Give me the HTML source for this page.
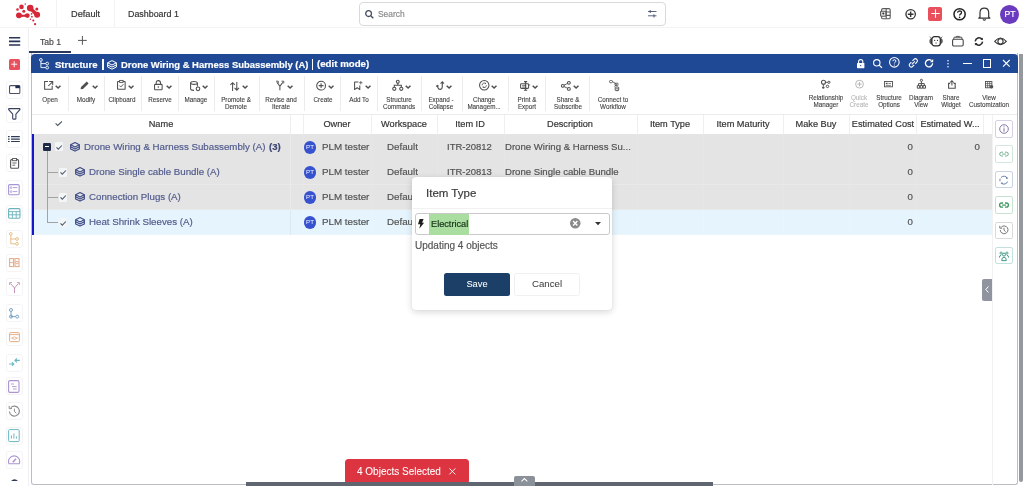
<!DOCTYPE html>
<html><head><meta charset="utf-8">
<style>
*{box-sizing:border-box;margin:0;padding:0}
html,body{width:1024px;height:486px;overflow:hidden;background:#fff;font-family:"Liberation Sans",sans-serif;color:#333}
.a{position:absolute}
.t{position:absolute;white-space:nowrap;line-height:1;will-change:transform;-webkit-text-stroke:0.18px currentColor}
svg{position:absolute;overflow:visible}
.lb{position:absolute;width:60px;text-align:center;font-size:6.3px;line-height:7.2px;color:#3d3d3d;white-space:nowrap;will-change:transform;-webkit-text-stroke:0.1px currentColor}
</style></head><body>
<div class="a" style="left:0px;top:27.3px;width:1024px;height:1px;background:#f3f3f3;"></div>
<div class="a" style="left:56px;top:0px;width:1px;height:27px;background:#f2f2f2;"></div>
<div class="a" style="left:114px;top:0px;width:1px;height:27px;background:#f2f2f2;"></div>
<svg style="left:0px;top:0px;" width="50" height="28" viewBox="0 0 50 28"><circle cx="21.5" cy="6.9" r="2.3" fill="#d62839"/><circle cx="25.3" cy="4.0" r="0.8" fill="#d62839"/><circle cx="30.2" cy="8.1" r="3.3" fill="#d62839"/><circle cx="37.1" cy="14.7" r="3.0" fill="#d62839"/><circle cx="36.8" cy="8.9" r="1.5" fill="#d62839"/><circle cx="17.5" cy="9.5" r="1.3" fill="#d62839"/><circle cx="23.8" cy="11.2" r="1.5" fill="#d62839"/><circle cx="18.9" cy="15.3" r="2.9" fill="#d62839"/><circle cx="27.3" cy="15.6" r="2.4" fill="#d62839"/><circle cx="31.6" cy="13.8" r="0.9" fill="#d62839"/><circle cx="31.9" cy="16.7" r="0.9" fill="#d62839"/><circle cx="30.4" cy="19.3" r="0.7" fill="#d62839"/><circle cx="33.3" cy="20.5" r="1.1" fill="#d62839"/><circle cx="35.1" cy="24.2" r="1.1" fill="#d62839"/><path d="M29.3 9.8 L31.8 7.4 L38.3 13.6 L35.8 16Z" fill="#d62839"/><path d="M19 14.1 Q23 15.3 27.3 14.1 L27.3 17.1 Q23 16.2 19 17.4Z" fill="#d62839"/></svg>
<div class="t" style="left:70.50px;top:10.31px;font-size:9.2px;color:#333;font-weight:normal;">Default</div>
<div class="t" style="left:127.60px;top:9.57px;font-size:8.9px;color:#333;font-weight:normal;">Dashboard 1</div>
<div class="a" style="left:358.5px;top:2px;width:307.5px;height:23.5px;border:1px solid #d9d9d9;border-radius:4px"></div>
<svg style="left:364.5px;top:10.2px;" width="9" height="8.5" viewBox="0 0 9 8.5"><circle cx="3.6" cy="3.6" r="2.9" fill="none" stroke="#454b5e" stroke-width="1.3"/><path d="M5.8 5.8 L8.3 8.2" stroke="#454b5e" stroke-width="1.4"/></svg>
<div class="t" style="left:377.80px;top:9.69px;font-size:8.4px;color:#8a8a8a;font-weight:normal;">Search</div>
<svg style="left:648px;top:9.8px;" width="8.5" height="7.5" viewBox="0 0 8.5 7.5"><path d="M0 1.5H8.5M0 5.8H8.5" stroke="#4a5570" stroke-width="0.9"/><path d="M2.2 0V3M6 4.3V7.5" stroke="#4a5570" stroke-width="1"/></svg>
<svg style="left:880.3px;top:8.2px;" width="10.8" height="11.4" viewBox="0 0 10.8 11.4"><rect x="1.6" y="0.6" width="8.6" height="10.2" rx="1.4" fill="none" stroke="#5a5a5a" stroke-width="1.1"/><rect x="0.6" y="3.2" width="5.4" height="5" rx="0.8" fill="#e2e2e2" stroke="#5a5a5a" stroke-width="1.1"/><path d="M6.2 0.6V10.8M6.2 4H10.2M6.2 7.4H10.2" stroke="#5a5a5a" stroke-width="1.1"/><circle cx="3.3" cy="5.6" r="1" fill="#333"/></svg>
<svg style="left:904.6px;top:8.7px;" width="11.3" height="10.5" viewBox="0 0 11.3 10.5"><circle cx="5.65" cy="5.25" r="4.7" fill="none" stroke="#333" stroke-width="1.3"/><path d="M5.65 2.4V8.1M2.8 5.25H8.5" stroke="#333" stroke-width="1.4"/></svg>
<div class="a" style="left:927.9px;top:6.8px;width:14.3px;height:14.2px;background:#e9505c;border-radius:2px;"></div>
<svg style="left:930.6px;top:9.4px;" width="9" height="9" viewBox="0 0 9 9"><path d="M4.5 0.3V8.7M0.3 4.5H8.7" stroke="#fff" stroke-width="1.05"/></svg>
<svg style="left:953px;top:7.8px;" width="13.2" height="12.5" viewBox="0 0 13.2 12.5"><circle cx="6.6" cy="6.25" r="5.6" fill="none" stroke="#222" stroke-width="1.5"/><path d="M4.6 4.7 Q4.7 2.8 6.6 2.8 Q8.6 2.9 8.5 4.6 Q8.4 5.8 7 6.4 Q6.6 6.7 6.6 7.6" fill="none" stroke="#222" stroke-width="1.3"/><circle cx="6.6" cy="9.4" r="0.8" fill="#222"/></svg>
<svg style="left:978.3px;top:6.8px;" width="12.7" height="13.5" viewBox="0 0 12.7 13.5"><path d="M2 10 V5.8 Q2 1.2 6.35 1.2 Q10.7 1.2 10.7 5.8 V10 L11.9 11.2 H0.8 Z" fill="none" stroke="#333" stroke-width="1.2" stroke-linejoin="round"/><path d="M4.9 12.3 Q6.35 13.8 7.8 12.3" fill="none" stroke="#333" stroke-width="1.2"/></svg>
<div class="a" style="left:1000px;top:4.5px;width:19px;height:19px;background:#6a3abf;border-radius:50%;"></div>
<div class="t" style="left:999.50px;top:10.02px;width:20px;text-align:center;font-size:8.6px;color:#fff;font-weight:normal;">PT</div>
<div class="a" style="left:28px;top:28px;width:1px;height:458px;background:#eef0f3;"></div>
<svg style="left:8.6px;top:37px;" width="11.2" height="8.8" viewBox="0 0 11.2 8.8"><path d="M0 0.8H11.2M0 4.4H11.2M0 8H11.2" stroke="#2a3454" stroke-width="1.6"/></svg>
<div class="t" style="left:40.30px;top:37.62px;font-size:8.6px;color:#4a4a4a;font-weight:normal;">Tab 1</div>
<svg style="left:78.3px;top:36.1px;" width="8.8" height="8.8" viewBox="0 0 8.8 8.8"><path d="M4.4 0V8.8M0 4.4H8.8" stroke="#555" stroke-width="1"/></svg>
<div class="a" style="left:29px;top:51px;width:42.2px;height:2px;background:#28385a;"></div>
<svg style="left:929.3px;top:35.5px;" width="14" height="10.5" viewBox="0 0 14 10.5"><path d="M3 2 Q0.4 2.4 0.4 5.2 Q0.4 8 3 8.5 Z M11.2 2 Q13.8 2.4 13.8 5.2 Q13.8 8 11.2 8.5 Z" fill="#5a5a5a"/><path d="M0.9 0.6 L2.6 2.4 M13.3 0.6 L11.6 2.4" stroke="#666" stroke-width="0.9"/><rect x="2.9" y="0.6" width="8.4" height="9.3" rx="2.6" fill="#fff" stroke="#2a2a2a" stroke-width="1.2"/><path d="M4.9 5 L5.7 3.6 L6.5 5Z M7.7 5 L8.5 3.6 L9.3 5Z" fill="#333"/><path d="M5.8 6.8 Q7.1 8.2 8.4 6.8 Z" fill="#333"/></svg>
<svg style="left:951.9px;top:36px;" width="11.8" height="10.5" viewBox="0 0 11.8 10.5"><rect x="0.6" y="3.2" width="10.6" height="6.8" rx="1.2" fill="none" stroke="#444" stroke-width="1.1"/><path d="M1.8 3.2 V2 Q1.8 1.2 2.6 1.2 H9.2 Q10 1.2 10 2 V3.2" fill="none" stroke="#444" stroke-width="1"/><path d="M4.5 1.2V0.4H7.3V1.2" fill="none" stroke="#444" stroke-width="0.8"/></svg>
<svg style="left:974px;top:37px;" width="9.8" height="9" viewBox="0 0 9.8 9"><path d="M1.2 4.3 A3.9 3.9 0 0 1 8 2.2" fill="none" stroke="#2a2a2a" stroke-width="1.5"/><path d="M8.6 4.7 A3.9 3.9 0 0 1 1.8 6.8" fill="none" stroke="#2a2a2a" stroke-width="1.5"/><path d="M8.9 0.4V3H6.3Z" fill="#333"/><path d="M0.9 8.6V6H3.5Z" fill="#333"/></svg>
<svg style="left:994px;top:36.7px;" width="13" height="8.8" viewBox="0 0 13 8.8"><path d="M0.7 4.4 Q6.5 -2.4 12.3 4.4 Q6.5 11.2 0.7 4.4Z" fill="none" stroke="#333" stroke-width="1.05"/><circle cx="6.5" cy="4.4" r="2.6" fill="none" stroke="#333" stroke-width="1.1"/></svg>
<div class="a" style="left:31px;top:53.2px;width:986.5px;height:431.8px;border:1px solid #babec3;border-top:none;border-radius:0 0 3px 3px"></div>
<div class="a" style="left:31px;top:53.5px;width:986.5px;height:19.6px;background:#1f4995;border-radius:4px 4px 0 0;"></div>
<svg style="left:39px;top:57.9px;" width="10" height="11.7" viewBox="0 0 10 11.7"><circle cx="1.9" cy="1.9" r="1.4" fill="none" stroke="#fff" stroke-width="0.9"/><path d="M1.9 3.3V9.6H6.8M1.9 5.6H6.8" fill="none" stroke="#fff" stroke-width="0.9"/><circle cx="8.2" cy="5.6" r="1.4" fill="none" stroke="#fff" stroke-width="0.9"/><circle cx="8.2" cy="9.6" r="1.4" fill="none" stroke="#fff" stroke-width="0.9"/></svg>
<div class="t" style="left:55.20px;top:59.52px;font-size:9.55px;color:#fff;font-weight:bold;">Structure</div>
<div class="a" style="left:102.4px;top:59.3px;width:1.2px;height:10.7px;background:#fff;"></div>
<svg style="left:107.1px;top:60.1px;" width="9.8" height="9.5" viewBox="0 0 9.8 9.5"><path d="M5 0.6 L9.4 2.8 V7 L5 9.2 L0.6 7 V2.8Z" fill="none" stroke="#fff" stroke-width="1.0" stroke-linejoin="round"/><path d="M0.6 2.8 L5 5 L9.4 2.8 M0.6 4.9 L5 7.1 L9.4 4.9" fill="none" stroke="#fff" stroke-width="1.0" stroke-linejoin="round"/></svg>
<div class="t" style="left:120.60px;top:59.62px;font-size:9.43px;color:#fff;font-weight:bold;">Drone Wiring &amp; Harness Subassembly (A)</div>
<div class="a" style="left:312.3px;top:59.3px;width:1.2px;height:10.7px;background:#fff;"></div>
<div class="t" style="left:316.60px;top:59.39px;font-size:9.7px;color:#fff;font-weight:bold;">(edit mode)</div>
<svg style="left:856.6px;top:58.8px;" width="7.4" height="9.2" viewBox="0 0 7.4 9.2"><path d="M1.6 4.2 V2.6 Q1.6 0.6 3.7 0.6 Q5.8 0.6 5.8 2.6 V4.2" fill="none" stroke="#fff" stroke-width="1.1"/><rect x="0" y="4" width="7.4" height="5.2" rx="0.6" fill="#fff"/><circle cx="3.7" cy="6.6" r="0.7" fill="#1f4995"/></svg>
<svg style="left:872.7px;top:59.3px;" width="9.3" height="8.7" viewBox="0 0 9.3 8.7"><circle cx="3.8" cy="3.8" r="3.2" fill="none" stroke="#fff" stroke-width="1.1"/><path d="M6.1 6.1 L9 8.7" stroke="#fff" stroke-width="1.2"/></svg>
<svg style="left:889.3px;top:57.3px;" width="10.7" height="10.7" viewBox="0 0 10.7 10.7"><circle cx="5.35" cy="5.35" r="4.8" fill="none" stroke="#fff" stroke-width="1.1"/><path d="M3.9 4.2 Q3.9 2.7 5.35 2.7 Q6.9 2.7 6.9 4.1 Q6.9 5 5.7 5.6 Q5.35 5.8 5.35 6.5" fill="none" stroke="#fff" stroke-width="1"/><circle cx="5.35" cy="8" r="0.6" fill="#fff"/></svg>
<svg style="left:907.9px;top:58.2px;" width="10.7" height="9.8" viewBox="0 0 10.7 9.8"><g transform="rotate(-45 5.35 4.9)"><path d="M4.6 2.9 H2.4 Q0.4 2.9 0.4 4.9 Q0.4 6.9 2.4 6.9 H4.6 M6.1 2.9 H8.3 Q10.3 2.9 10.3 4.9 Q10.3 6.9 8.3 6.9 H6.1 M3.2 4.9 H7.5" fill="none" stroke="#fff" stroke-width="1.1"/></g></svg>
<svg style="left:924.5px;top:59.2px;" width="8.9" height="8.2" viewBox="0 0 8.9 8.2"><path d="M7.6 4.3 A3.6 3.6 0 1 1 6.4 1.6" fill="none" stroke="#fff" stroke-width="1.3"/><path d="M8.2 0 V3.2 H5 Z" fill="#fff"/></svg>
<svg style="left:947px;top:59.5px;" width="2" height="7.5" viewBox="0 0 2 7.5"><circle cx="1" cy="0.8" r="0.75" fill="#fff"/><circle cx="1" cy="3.75" r="0.75" fill="#fff"/><circle cx="1" cy="6.7" r="0.75" fill="#fff"/></svg>
<div class="a" style="left:962.7px;top:63px;width:9.8px;height:1.1px;background:#fff;"></div>
<div class="a" style="left:982.8px;top:59.4px;width:8.2px;height:8.2px;border:1.1px solid #fff"></div>
<svg style="left:1002.8px;top:60.4px;" width="6.7" height="6.7" viewBox="0 0 6.7 6.7"><path d="M0 0L6.7 6.7M6.7 0L0 6.7" stroke="#fff" stroke-width="1.1"/></svg>
<div class="a" style="left:1018.6px;top:53.7px;width:4.2px;height:428.5px;background:#95989c;border-radius:0 0 2px 2px;"></div>
<div class="a" style="left:32px;top:113.9px;width:985px;height:0.9px;background:#ebebeb;"></div>
<div class="a" style="left:67.5px;top:76px;width:0.8px;height:35px;background:#ececec;"></div>
<div class="a" style="left:103.8px;top:76px;width:0.8px;height:35px;background:#ececec;"></div>
<div class="a" style="left:141.2px;top:76px;width:0.8px;height:35px;background:#ececec;"></div>
<div class="a" style="left:177.5px;top:76px;width:0.8px;height:35px;background:#ececec;"></div>
<div class="a" style="left:213.7px;top:76px;width:0.8px;height:35px;background:#ececec;"></div>
<div class="a" style="left:258.6px;top:76px;width:0.8px;height:35px;background:#ececec;"></div>
<div class="a" style="left:304.3px;top:76px;width:0.8px;height:35px;background:#ececec;"></div>
<div class="a" style="left:340.4px;top:76px;width:0.8px;height:35px;background:#ececec;"></div>
<div class="a" style="left:376.5px;top:76px;width:0.8px;height:35px;background:#ececec;"></div>
<div class="a" style="left:421.3px;top:76px;width:0.8px;height:35px;background:#ececec;"></div>
<div class="a" style="left:461.6px;top:76px;width:0.8px;height:35px;background:#ececec;"></div>
<div class="a" style="left:507.9px;top:76px;width:0.8px;height:35px;background:#ececec;"></div>
<div class="a" style="left:545.4px;top:76px;width:0.8px;height:35px;background:#ececec;"></div>
<div class="a" style="left:589.3px;top:76px;width:0.8px;height:35px;background:#ececec;"></div>
<svg style="left:43.8px;top:80.9px;" width="9.3" height="8.8" viewBox="0 0 9.3 8.8"><path d="M4 0.6H0.6V8.2H8.2V4.8" fill="none" stroke="#4f4f4f" stroke-width="1.05"/><path d="M5.2 0.6H8.7V4.1M8.5 0.8L4.3 5" fill="none" stroke="#4f4f4f" stroke-width="1.05"/></svg>
<svg style="left:55.3px;top:85px;" width="6.2" height="4" viewBox="0 0 6.2 4"><path d="M0.7 0.7 L3.1 3.1 L5.5 0.7" fill="none" stroke="#4f4f4f" stroke-width="1.45"/></svg>
<div class="lb" style="left:19.50px;top:95.7px;color:#3d3d3d">Open</div>
<svg style="left:79.5px;top:81.4px;" width="9.2" height="8.8" viewBox="0 0 9.2 8.8"><path d="M0.6 8.2 L1 6 L6.8 0.6 L8.6 2.4 L3 8 Z" fill="#4f4f4f"/></svg>
<svg style="left:91.5px;top:85px;" width="6.2" height="4" viewBox="0 0 6.2 4"><path d="M0.7 0.7 L3.1 3.1 L5.5 0.7" fill="none" stroke="#4f4f4f" stroke-width="1.45"/></svg>
<div class="lb" style="left:55.50px;top:95.7px;color:#3d3d3d">Modify</div>
<svg style="left:116.9px;top:80.1px;" width="8.7" height="9.8" viewBox="0 0 8.7 9.8"><rect x="0.55" y="1.5" width="7.6" height="7.8" rx="0.4" fill="none" stroke="#4f4f4f" stroke-width="1.05"/><rect x="2.6" y="0.4" width="3.5" height="2" fill="#fff" stroke="#4f4f4f" stroke-width="0.9"/><path d="M2.4 5.6 L3.8 7 L6.4 4.2" fill="none" stroke="#4f4f4f" stroke-width="0.9"/></svg>
<svg style="left:128.10000000000002px;top:85px;" width="6.2" height="4" viewBox="0 0 6.2 4"><path d="M0.7 0.7 L3.1 3.1 L5.5 0.7" fill="none" stroke="#4f4f4f" stroke-width="1.45"/></svg>
<div class="lb" style="left:92.40px;top:95.7px;color:#3d3d3d">Clipboard</div>
<svg style="left:154.4px;top:80.4px;" width="8.7" height="10.4" viewBox="0 0 8.7 10.4"><path d="M2.2 4.4 V2.8 Q2.2 0.6 4.35 0.6 Q6.5 0.6 6.5 2.8 V4.4" fill="none" stroke="#4f4f4f" stroke-width="1.05"/><rect x="0.55" y="4.4" width="7.6" height="5.4" rx="0.8" fill="none" stroke="#4f4f4f" stroke-width="1.05"/><circle cx="4.35" cy="7" r="0.8" fill="#4f4f4f"/></svg>
<svg style="left:165.60000000000002px;top:85px;" width="6.2" height="4" viewBox="0 0 6.2 4"><path d="M0.7 0.7 L3.1 3.1 L5.5 0.7" fill="none" stroke="#4f4f4f" stroke-width="1.45"/></svg>
<div class="lb" style="left:129.75px;top:95.7px;color:#3d3d3d">Reserve</div>
<svg style="left:189.7px;top:80.7px;" width="10.5" height="10.1" viewBox="0 0 10.5 10.1"><ellipse cx="4" cy="2" rx="3.4" ry="1.4" fill="none" stroke="#4f4f4f" stroke-width="1.05"/><path d="M0.6 2V8 Q0.6 9.3 4 9.4 M7.4 2V5.5" fill="none" stroke="#4f4f4f" stroke-width="1.05"/><circle cx="8" cy="7.8" r="1.8" fill="#fff" stroke="#4f4f4f" stroke-width="1.1"/></svg>
<svg style="left:201.5px;top:85px;" width="6.2" height="4" viewBox="0 0 6.2 4"><path d="M0.7 0.7 L3.1 3.1 L5.5 0.7" fill="none" stroke="#4f4f4f" stroke-width="1.45"/></svg>
<div class="lb" style="left:165.70px;top:95.7px;color:#3d3d3d">Manage</div>
<svg style="left:230.3px;top:81.5px;" width="9.4" height="8.9" viewBox="0 0 9.4 8.9"><path d="M2.6 8.9V0.8M0.4 2.9L2.6 0.7L4.8 2.9M6.8 0V8.1M4.6 6L6.8 8.2L9 6" fill="none" stroke="#4f4f4f" stroke-width="1.05"/></svg>
<svg style="left:241.70000000000002px;top:85px;" width="6.2" height="4" viewBox="0 0 6.2 4"><path d="M0.7 0.7 L3.1 3.1 L5.5 0.7" fill="none" stroke="#4f4f4f" stroke-width="1.45"/></svg>
<div class="lb" style="left:205.50px;top:95.7px;color:#3d3d3d">Promote &amp;<br>Demote</div>
<svg style="left:276px;top:81.2px;" width="7.8" height="9.2" viewBox="0 0 7.8 9.2"><path d="M3.9 9.2V5.2L0.8 1.2M3.9 5.2L7 1.2" fill="none" stroke="#4f4f4f" stroke-width="1.05"/><path d="M0 0.2H2.3V2.4M5.5 0.2H7.8V2.4" fill="none" stroke="#4f4f4f" stroke-width="0.9"/></svg>
<svg style="left:286.7px;top:85px;" width="6.2" height="4" viewBox="0 0 6.2 4"><path d="M0.7 0.7 L3.1 3.1 L5.5 0.7" fill="none" stroke="#4f4f4f" stroke-width="1.45"/></svg>
<div class="lb" style="left:251.20px;top:95.7px;color:#3d3d3d">Revise and<br>Iterate</div>
<svg style="left:315.9px;top:80.8px;" width="10.2" height="9.3" viewBox="0 0 10.2 9.3"><circle cx="5.1" cy="4.65" r="4.4" fill="none" stroke="#4f4f4f" stroke-width="1.05"/><path d="M5.1 2.2V7.1M2.65 4.65H7.55" stroke="#4f4f4f" stroke-width="1.05"/></svg>
<svg style="left:328.2px;top:85px;" width="6.2" height="4" viewBox="0 0 6.2 4"><path d="M0.7 0.7 L3.1 3.1 L5.5 0.7" fill="none" stroke="#4f4f4f" stroke-width="1.45"/></svg>
<div class="lb" style="left:292.50px;top:95.7px;color:#3d3d3d">Create</div>
<svg style="left:353.75px;top:80.7px;" width="8.3" height="9.1" viewBox="0 0 8.3 9.1"><path d="M4.4 1H0.6V8.6L3.2 6.8L5.8 8.6V4.6" fill="none" stroke="#4f4f4f" stroke-width="1.05" stroke-linejoin="round"/><path d="M6.8 0V3.4M5.1 1.7H8.5" stroke="#4f4f4f" stroke-width="0.8"/></svg>
<svg style="left:364.6px;top:85px;" width="6.2" height="4" viewBox="0 0 6.2 4"><path d="M0.7 0.7 L3.1 3.1 L5.5 0.7" fill="none" stroke="#4f4f4f" stroke-width="1.45"/></svg>
<div class="lb" style="left:329.00px;top:95.7px;color:#3d3d3d">Add To</div>
<svg style="left:391.5px;top:80px;" width="12" height="11" viewBox="0 0 12 11"><circle cx="5.8" cy="1.7" r="1.4" fill="none" stroke="#4f4f4f" stroke-width="1.1"/><path d="M5.8 3.1V5.2M2.3 7.2V5.2H9.3V7.2" fill="none" stroke="#4f4f4f" stroke-width="1.1"/><circle cx="2.3" cy="8.8" r="1.6" fill="none" stroke="#4f4f4f" stroke-width="1.1"/><circle cx="9.3" cy="8.8" r="1.6" fill="none" stroke="#4f4f4f" stroke-width="1.1"/></svg>
<svg style="left:404.8px;top:85px;" width="6.2" height="4" viewBox="0 0 6.2 4"><path d="M0.7 0.7 L3.1 3.1 L5.5 0.7" fill="none" stroke="#4f4f4f" stroke-width="1.45"/></svg>
<div class="lb" style="left:369.00px;top:95.7px;color:#3d3d3d">Structure<br>Commands</div>
<svg style="left:435.5px;top:80.8px;" width="8" height="9.2" viewBox="0 0 8 9.2"><path d="M1.2 4.6 L1.9 6.6 Q2.6 8.6 4.4 8.4 Q6.3 8.1 6.3 5.8 V1" fill="none" stroke="#4f4f4f" stroke-width="1.15"/><path d="M4.6 2.6L6.3 0.8L8 2.6M0.2 5.6L1.3 4.4L2.6 5.2" fill="none" stroke="#4f4f4f" stroke-width="1.05"/></svg>
<svg style="left:446.2px;top:85px;" width="6.2" height="4" viewBox="0 0 6.2 4"><path d="M0.7 0.7 L3.1 3.1 L5.5 0.7" fill="none" stroke="#4f4f4f" stroke-width="1.45"/></svg>
<div class="lb" style="left:411.30px;top:95.7px;color:#3d3d3d">Expand -<br>Collapse</div>
<svg style="left:478.7px;top:80.4px;" width="10.5" height="10.6" viewBox="0 0 10.5 10.6"><circle cx="5.25" cy="5.3" r="4.7" fill="none" stroke="#4f4f4f" stroke-width="1.05"/><path d="M3.1 5.3 A2.2 2.2 0 0 1 6.6 3.5 M7.4 5.3 A2.2 2.2 0 0 1 3.9 7.1" fill="none" stroke="#4f4f4f" stroke-width="0.9"/><path d="M6.1 2.6L7.2 3.7L5.9 4.3Z M4.4 8 L3.3 6.9 L4.6 6.3Z" fill="#4f4f4f"/></svg>
<svg style="left:490.8px;top:85px;" width="6.2" height="4" viewBox="0 0 6.2 4"><path d="M0.7 0.7 L3.1 3.1 L5.5 0.7" fill="none" stroke="#4f4f4f" stroke-width="1.45"/></svg>
<div class="lb" style="left:454.00px;top:95.7px;color:#3d3d3d">Change<br>Managem...</div>
<svg style="left:520px;top:81.3px;" width="10.5" height="9.7" viewBox="0 0 10.5 9.7"><rect x="0.6" y="2.8" width="8" height="4.6" rx="0.8" fill="none" stroke="#4f4f4f" stroke-width="1.05"/><path d="M2.2 4.4H6.2M2.2 6H6.2" stroke="#4f4f4f" stroke-width="0.8"/><path d="M5.6 0.6V9.2M4 0.6H7.2M4 9.2H7.2" stroke="#4f4f4f" stroke-width="1.1"/><path d="M8.6 4 H10.2" stroke="#4f4f4f" stroke-width="0.8"/></svg>
<svg style="left:532.0999999999999px;top:85px;" width="6.2" height="4" viewBox="0 0 6.2 4"><path d="M0.7 0.7 L3.1 3.1 L5.5 0.7" fill="none" stroke="#4f4f4f" stroke-width="1.45"/></svg>
<div class="lb" style="left:496.90px;top:95.7px;color:#3d3d3d">Print &amp;<br>Export</div>
<svg style="left:561.3px;top:81.3px;" width="9.7" height="9.7" viewBox="0 0 9.7 9.7"><circle cx="7.9" cy="1.8" r="1.4" fill="none" stroke="#4f4f4f" stroke-width="1.05"/><circle cx="1.8" cy="4.85" r="1.4" fill="none" stroke="#4f4f4f" stroke-width="1.05"/><circle cx="7.9" cy="7.9" r="1.4" fill="none" stroke="#4f4f4f" stroke-width="1.05"/><path d="M3 4.2L6.7 2.4M3 5.5L6.7 7.3" stroke="#4f4f4f" stroke-width="0.9"/></svg>
<svg style="left:573.4px;top:85px;" width="6.2" height="4" viewBox="0 0 6.2 4"><path d="M0.7 0.7 L3.1 3.1 L5.5 0.7" fill="none" stroke="#4f4f4f" stroke-width="1.45"/></svg>
<div class="lb" style="left:537.80px;top:95.7px;color:#3d3d3d">Share &amp;<br>Subscribe</div>
<svg style="left:608.7px;top:79.9px;" width="10.6" height="11.1" viewBox="0 0 10.6 11.1"><rect x="0.5" y="0.5" width="3" height="2.2" rx="1" fill="none" stroke="#4f4f4f" stroke-width="0.9"/><path d="M3.5 1.6 L7.5 4.2 M7.5 4.2 L5.6 6.6" fill="none" stroke="#4f4f4f" stroke-width="0.9"/><rect x="6" y="3.2" width="3" height="2.2" rx="0.5" fill="none" stroke="#4f4f4f" stroke-width="0.9"/><rect x="6.2" y="7" width="3.5" height="3.6" rx="0.6" fill="none" stroke="#4f4f4f" stroke-width="1"/><path d="M7 8.8H9" stroke="#4f4f4f" stroke-width="0.8"/></svg>
<div class="lb" style="left:583.20px;top:95.7px;color:#3d3d3d">Connect to<br>Workflow</div>
<svg style="left:820.9px;top:80.1px;" width="9.1" height="8.8" viewBox="0 0 9.1 8.8"><circle cx="2.5" cy="2.2" r="2" fill="none" stroke="#4f4f4f" stroke-width="1.1"/><circle cx="7.9" cy="2.3" r="1.1" fill="none" stroke="#4f4f4f" stroke-width="1"/><circle cx="6.5" cy="6.4" r="1.2" fill="none" stroke="#4f4f4f" stroke-width="1"/><circle cx="2.3" cy="7.6" r="1.2" fill="#4f4f4f"/><path d="M4.5 2.3H6.8M2.4 4.2V6.5" stroke="#4f4f4f" stroke-width="0.9"/></svg>
<div class="lb" style="left:795.60px;top:94.2px;color:#3d3d3d">Relationship<br>Manager</div>
<svg style="left:854.7px;top:80.4px;" width="9" height="8.3" viewBox="0 0 9 8.3"><circle cx="4.5" cy="4.15" r="3.9" fill="none" stroke="#b0b0b0" stroke-width="0.9"/><path d="M4.5 2V6.3M2.35 4.15H6.65" stroke="#b0b0b0" stroke-width="0.9"/></svg>
<div class="lb" style="left:829.00px;top:94.2px;color:#b5b5b5">Quick<br>Create</div>
<svg style="left:884px;top:81.4px;" width="9" height="6.3" viewBox="0 0 9 6.3"><rect x="0.5" y="0.5" width="8" height="5.3" fill="none" stroke="#4f4f4f" stroke-width="0.9"/><rect x="1.8" y="1.8" width="1.8" height="1.4" fill="#4f4f4f"/><path d="M4.4 2.5H7M1.8 4.4H7" stroke="#4f4f4f" stroke-width="0.7"/></svg>
<div class="lb" style="left:858.60px;top:94.2px;color:#3d3d3d">Structure<br>Options</div>
<svg style="left:916.2px;top:78.9px;" width="10.8" height="9.8" viewBox="0 0 10.8 9.8"><circle cx="5.4" cy="1.3" r="1.1" fill="none" stroke="#4f4f4f" stroke-width="1"/><path d="M5.4 2.4V4.6M2.5 7V4.6H8.3V7M5.4 4.6V7" fill="none" stroke="#4f4f4f" stroke-width="1"/><path d="M1.3 6.6H3.7V9.2H1.3Z M4.2 6.6H6.6V9.2H4.2Z M7.1 6.6H9.5V9.2H7.1Z" fill="none" stroke="#4f4f4f" stroke-width="1"/></svg>
<div class="lb" style="left:891.00px;top:94.2px;color:#3d3d3d">Diagram<br>View</div>
<svg style="left:948px;top:79.9px;" width="7.8" height="8.8" viewBox="0 0 7.8 8.8"><path d="M2.2 3.4H0.6V8.2H7.2V3.4H5.6" fill="none" stroke="#4f4f4f" stroke-width="1.1"/><path d="M3.9 5.6V0.8M2.1 2.5L3.9 0.7L5.7 2.5" fill="none" stroke="#4f4f4f" stroke-width="1.05"/></svg>
<div class="lb" style="left:921.40px;top:94.2px;color:#3d3d3d">Share<br>Widget</div>
<svg style="left:985px;top:81.4px;" width="8.4" height="7.3" viewBox="0 0 8.4 7.3"><rect x="0.5" y="0.5" width="6.4" height="6.3" fill="none" stroke="#4f4f4f" stroke-width="0.9"/><path d="M2.6 0.5V6.8M4.7 0.5V6.8M0.5 2.6H6.9M0.5 4.7H6.9" stroke="#4f4f4f" stroke-width="0.7"/><circle cx="6.6" cy="5.7" r="1.7" fill="#4f4f4f"/></svg>
<div class="lb" style="left:959.00px;top:94.2px;color:#3d3d3d">View<br>Customization</div>
<div class="a" style="left:289.6px;top:114.5px;width:0.8px;height:19.5px;background:#efefef;"></div>
<div class="a" style="left:303.2px;top:114.5px;width:0.8px;height:19.5px;background:#efefef;"></div>
<div class="a" style="left:370.5px;top:114.5px;width:0.8px;height:19.5px;background:#efefef;"></div>
<div class="a" style="left:436.6px;top:114.5px;width:0.8px;height:19.5px;background:#efefef;"></div>
<div class="a" style="left:503.5px;top:114.5px;width:0.8px;height:19.5px;background:#efefef;"></div>
<div class="a" style="left:636.6px;top:114.5px;width:0.8px;height:19.5px;background:#efefef;"></div>
<div class="a" style="left:702.8px;top:114.5px;width:0.8px;height:19.5px;background:#efefef;"></div>
<div class="a" style="left:782.7px;top:114.5px;width:0.8px;height:19.5px;background:#efefef;"></div>
<div class="a" style="left:849.4px;top:114.5px;width:0.8px;height:19.5px;background:#efefef;"></div>
<div class="a" style="left:916.1px;top:114.5px;width:0.8px;height:19.5px;background:#efefef;"></div>
<div class="a" style="left:982.9px;top:114.5px;width:0.8px;height:19.5px;background:#efefef;"></div>
<div class="a" style="left:32px;top:133.6px;width:960.5px;height:0.8px;background:#e6e6e6;"></div>
<svg style="left:54.6px;top:120.8px;" width="7.4" height="5.2" viewBox="0 0 7.4 5.2"><path d="M0.6 2.4 L2.7 4.5 L6.9 0.5" fill="none" stroke="#515866" stroke-width="1.05"/></svg>
<div class="t" style="left:111.30px;top:119.71px;width:100px;text-align:center;font-size:9.2px;color:#333333;font-weight:normal;">Name</div>
<div class="t" style="left:286.85px;top:119.71px;width:100px;text-align:center;font-size:9.2px;color:#333333;font-weight:normal;">Owner</div>
<div class="t" style="left:353.50px;top:119.71px;width:100px;text-align:center;font-size:9.2px;color:#333333;font-weight:normal;">Workspace</div>
<div class="t" style="left:420.00px;top:119.71px;width:100px;text-align:center;font-size:9.2px;color:#333333;font-weight:normal;">Item ID</div>
<div class="t" style="left:520.00px;top:119.71px;width:100px;text-align:center;font-size:9.2px;color:#333333;font-weight:normal;">Description</div>
<div class="t" style="left:619.70px;top:119.71px;width:100px;text-align:center;font-size:9.2px;color:#333333;font-weight:normal;">Item Type</div>
<div class="t" style="left:692.70px;top:119.71px;width:100px;text-align:center;font-size:9.2px;color:#333333;font-weight:normal;">Item Maturity</div>
<div class="t" style="left:766.00px;top:119.71px;width:100px;text-align:center;font-size:9.2px;color:#333333;font-weight:normal;">Make Buy</div>
<div class="t" style="left:832.70px;top:119.71px;width:100px;text-align:center;font-size:9.2px;color:#333333;font-weight:normal;">Estimated Cost</div>
<div class="t" style="left:899.50px;top:119.71px;width:100px;text-align:center;font-size:9.2px;color:#333333;font-weight:normal;">Estimated W...</div>
<div class="a" style="left:32px;top:134px;width:960.5px;height:25.2px;background:#e4e4e4;"></div>
<div class="a" style="left:32px;top:158.6px;width:960.5px;height:0.6px;background:#e9e9e9;"></div>
<div class="a" style="left:32px;top:159.2px;width:960.5px;height:25.4px;background:#e4e4e4;"></div>
<div class="a" style="left:32px;top:184.0px;width:960.5px;height:0.6px;background:#e9e9e9;"></div>
<div class="a" style="left:32px;top:184.6px;width:960.5px;height:25px;background:#e4e4e4;"></div>
<div class="a" style="left:32px;top:209.0px;width:960.5px;height:0.6px;background:#e9e9e9;"></div>
<div class="a" style="left:32px;top:209.6px;width:960.5px;height:25px;background:#e6f5fd;"></div>
<div class="a" style="left:32px;top:234.0px;width:960.5px;height:0.6px;background:#eaf6fc;"></div>
<div class="a" style="left:289.6px;top:134px;width:0.8px;height:75.6px;background:#ebebeb;"></div>
<div class="a" style="left:289.6px;top:209.6px;width:0.8px;height:25px;background:#dde9f0;"></div>
<div class="a" style="left:303.2px;top:134px;width:0.8px;height:75.6px;background:#e6e6e6;"></div>
<div class="a" style="left:303.2px;top:209.6px;width:0.8px;height:25px;background:#e8f6fd;"></div>
<div class="a" style="left:370.5px;top:134px;width:0.8px;height:75.6px;background:#e6e6e6;"></div>
<div class="a" style="left:370.5px;top:209.6px;width:0.8px;height:25px;background:#e8f6fd;"></div>
<div class="a" style="left:436.6px;top:134px;width:0.8px;height:75.6px;background:#e6e6e6;"></div>
<div class="a" style="left:436.6px;top:209.6px;width:0.8px;height:25px;background:#e8f6fd;"></div>
<div class="a" style="left:503.5px;top:134px;width:0.8px;height:75.6px;background:#e6e6e6;"></div>
<div class="a" style="left:503.5px;top:209.6px;width:0.8px;height:25px;background:#e8f6fd;"></div>
<div class="a" style="left:636.6px;top:134px;width:0.8px;height:75.6px;background:#e6e6e6;"></div>
<div class="a" style="left:636.6px;top:209.6px;width:0.8px;height:25px;background:#e8f6fd;"></div>
<div class="a" style="left:702.8px;top:134px;width:0.8px;height:75.6px;background:#e6e6e6;"></div>
<div class="a" style="left:702.8px;top:209.6px;width:0.8px;height:25px;background:#e8f6fd;"></div>
<div class="a" style="left:782.7px;top:134px;width:0.8px;height:75.6px;background:#e6e6e6;"></div>
<div class="a" style="left:782.7px;top:209.6px;width:0.8px;height:25px;background:#e8f6fd;"></div>
<div class="a" style="left:849.4px;top:134px;width:0.8px;height:75.6px;background:#e6e6e6;"></div>
<div class="a" style="left:849.4px;top:209.6px;width:0.8px;height:25px;background:#e8f6fd;"></div>
<div class="a" style="left:916.1px;top:134px;width:0.8px;height:75.6px;background:#e6e6e6;"></div>
<div class="a" style="left:916.1px;top:209.6px;width:0.8px;height:25px;background:#e8f6fd;"></div>
<div class="a" style="left:31.5px;top:134px;width:2.6px;height:100.6px;background:#1515c9;"></div>
<div class="a" style="left:42.9px;top:142.9px;width:8.2px;height:7.8px;background:#1f2a48;border-radius:1.2px;"></div>
<div class="a" style="left:44.6px;top:146.4px;width:4.8px;height:1px;background:#fff;"></div>
<div class="a" style="left:54.6px;top:142.4px;width:8.2px;height:8.5px;background:#f3f5f7;border-radius:1px;"></div>
<svg style="left:55.7px;top:144.6px;" width="6.2" height="4.8" viewBox="0 0 6.2 4.8"><path d="M0.5 2.4 L2.3 4.2 L5.9 0.5" fill="none" stroke="#4f5b6b" stroke-width="1.05"/></svg>
<svg style="left:69.9px;top:142px;" width="10" height="9.7" viewBox="0 0 10 9.8"><path d="M5 0.6 L9.4 2.8 V7 L5 9.2 L0.6 7 V2.8Z" fill="none" stroke="#3f4c88" stroke-width="1.2" stroke-linejoin="round"/><path d="M0.6 2.8 L5 5 L9.4 2.8 M0.6 4.9 L5 7.1 L9.4 4.9" fill="none" stroke="#3f4c88" stroke-width="1.2" stroke-linejoin="round"/></svg>
<div class="t" style="left:83.60px;top:142.17px;font-size:9.72px;color:#515b8c;font-weight:normal;">Drone Wiring &amp; Harness Subassembly (A)</div>
<div class="t" style="left:268.60px;top:142.27px;font-size:9.6px;color:#3c4675;font-weight:bold;">(3)</div>
<div class="a" style="left:46.6px;top:150.8px;width:0.6px;height:71.8px;background:#a2a2a2;"></div>
<div class="a" style="left:46.6px;top:171.7px;width:11.6px;height:0.6px;background:#a2a2a2;"></div>
<div class="a" style="left:46.6px;top:196.9px;width:11.6px;height:0.6px;background:#a2a2a2;"></div>
<div class="a" style="left:46.6px;top:222px;width:11.6px;height:0.6px;background:#a2a2a2;"></div>
<div class="a" style="left:59.2px;top:168.1px;width:8.2px;height:8.5px;background:#f3f5f7;border-radius:1px;"></div>
<svg style="left:60.300000000000004px;top:170.29999999999998px;" width="6.2" height="4.8" viewBox="0 0 6.2 4.8"><path d="M0.5 2.4 L2.3 4.2 L5.9 0.5" fill="none" stroke="#4f5b6b" stroke-width="1.05"/></svg>
<svg style="left:74.5px;top:167.1px;" width="10" height="9.7" viewBox="0 0 10 9.8"><path d="M5 0.6 L9.4 2.8 V7 L5 9.2 L0.6 7 V2.8Z" fill="none" stroke="#3f4c88" stroke-width="1.2" stroke-linejoin="round"/><path d="M0.6 2.8 L5 5 L9.4 2.8 M0.6 4.9 L5 7.1 L9.4 4.9" fill="none" stroke="#3f4c88" stroke-width="1.2" stroke-linejoin="round"/></svg>
<div class="t" style="left:88.50px;top:167.17px;font-size:9.72px;color:#515b8c;font-weight:normal;">Drone Single cable Bundle (A)</div>
<div class="a" style="left:59.2px;top:193.2px;width:8.2px;height:8.5px;background:#f3f5f7;border-radius:1px;"></div>
<svg style="left:60.300000000000004px;top:195.39999999999998px;" width="6.2" height="4.8" viewBox="0 0 6.2 4.8"><path d="M0.5 2.4 L2.3 4.2 L5.9 0.5" fill="none" stroke="#4f5b6b" stroke-width="1.05"/></svg>
<svg style="left:74.5px;top:192.2px;" width="10" height="9.7" viewBox="0 0 10 9.8"><path d="M5 0.6 L9.4 2.8 V7 L5 9.2 L0.6 7 V2.8Z" fill="none" stroke="#3f4c88" stroke-width="1.2" stroke-linejoin="round"/><path d="M0.6 2.8 L5 5 L9.4 2.8 M0.6 4.9 L5 7.1 L9.4 4.9" fill="none" stroke="#3f4c88" stroke-width="1.2" stroke-linejoin="round"/></svg>
<div class="t" style="left:88.50px;top:192.27px;font-size:9.72px;color:#515b8c;font-weight:normal;">Connection Plugs (A)</div>
<div class="a" style="left:59.2px;top:218.29999999999998px;width:8.2px;height:8.5px;background:#f3f5f7;border-radius:1px;"></div>
<svg style="left:60.300000000000004px;top:220.49999999999997px;" width="6.2" height="4.8" viewBox="0 0 6.2 4.8"><path d="M0.5 2.4 L2.3 4.2 L5.9 0.5" fill="none" stroke="#4f5b6b" stroke-width="1.05"/></svg>
<svg style="left:74.5px;top:217.29999999999998px;" width="10" height="9.7" viewBox="0 0 10 9.8"><path d="M5 0.6 L9.4 2.8 V7 L5 9.2 L0.6 7 V2.8Z" fill="none" stroke="#3f4c88" stroke-width="1.2" stroke-linejoin="round"/><path d="M0.6 2.8 L5 5 L9.4 2.8 M0.6 4.9 L5 7.1 L9.4 4.9" fill="none" stroke="#3f4c88" stroke-width="1.2" stroke-linejoin="round"/></svg>
<div class="t" style="left:88.50px;top:217.37px;font-size:9.72px;color:#515b8c;font-weight:normal;">Heat Shrink Sleeves (A)</div>
<div class="a" style="left:303.6px;top:141.0px;width:12.5px;height:12.5px;background:#3652cf;border-radius:50%;"></div>
<div class="t" style="left:302.85px;top:144.05px;width:14px;text-align:center;font-size:6.2px;color:#f0f2ff;font-weight:normal;-webkit-text-stroke:0;">PT</div>
<div class="t" style="left:321.60px;top:142.10px;font-size:9.8px;color:#525252;font-weight:normal;">PLM tester</div>
<div class="t" style="left:387.20px;top:142.15px;font-size:9.75px;color:#525252;font-weight:normal;">Default</div>
<div class="t" style="left:883.30px;top:142.19px;width:30px;text-align:right;font-size:9.7px;color:#525252;font-weight:normal">0</div>
<div class="a" style="left:303.6px;top:166.0px;width:12.5px;height:12.5px;background:#3652cf;border-radius:50%;"></div>
<div class="t" style="left:302.85px;top:169.05px;width:14px;text-align:center;font-size:6.2px;color:#f0f2ff;font-weight:normal;-webkit-text-stroke:0;">PT</div>
<div class="t" style="left:321.60px;top:167.10px;font-size:9.8px;color:#525252;font-weight:normal;">PLM tester</div>
<div class="t" style="left:387.20px;top:167.15px;font-size:9.75px;color:#525252;font-weight:normal;">Default</div>
<div class="t" style="left:883.30px;top:167.19px;width:30px;text-align:right;font-size:9.7px;color:#525252;font-weight:normal">0</div>
<div class="a" style="left:303.6px;top:191.1px;width:12.5px;height:12.5px;background:#3652cf;border-radius:50%;"></div>
<div class="t" style="left:302.85px;top:194.15px;width:14px;text-align:center;font-size:6.2px;color:#f0f2ff;font-weight:normal;-webkit-text-stroke:0;">PT</div>
<div class="t" style="left:321.60px;top:192.20px;font-size:9.8px;color:#525252;font-weight:normal;">PLM tester</div>
<div class="t" style="left:387.20px;top:192.25px;font-size:9.75px;color:#525252;font-weight:normal;">Default</div>
<div class="t" style="left:883.30px;top:192.29px;width:30px;text-align:right;font-size:9.7px;color:#525252;font-weight:normal">0</div>
<div class="a" style="left:303.6px;top:216.2px;width:12.5px;height:12.5px;background:#3652cf;border-radius:50%;"></div>
<div class="t" style="left:302.85px;top:219.25px;width:14px;text-align:center;font-size:6.2px;color:#f0f2ff;font-weight:normal;-webkit-text-stroke:0;">PT</div>
<div class="t" style="left:321.60px;top:217.30px;font-size:9.8px;color:#525252;font-weight:normal;">PLM tester</div>
<div class="t" style="left:387.20px;top:217.35px;font-size:9.75px;color:#525252;font-weight:normal;">Default</div>
<div class="t" style="left:883.30px;top:217.39px;width:30px;text-align:right;font-size:9.7px;color:#525252;font-weight:normal">0</div>
<div class="t" style="left:446.80px;top:142.36px;font-size:9.5px;color:#525252;font-weight:normal;">ITR-20812</div>
<div class="t" style="left:504.50px;top:142.27px;font-size:9.6px;color:#525252;font-weight:normal;">Drone Wiring &amp; Harness Su...</div>
<div class="t" style="left:446.80px;top:167.36px;font-size:9.5px;color:#525252;font-weight:normal;">ITR-20813</div>
<div class="t" style="left:504.50px;top:167.27px;font-size:9.6px;color:#525252;font-weight:normal;">Drone Single cable Bundle</div>
<div class="t" style="left:949.90px;top:142.19px;width:30px;text-align:right;font-size:9.7px;color:#525252;font-weight:normal">0</div>
<div class="a" style="left:992.4px;top:114.5px;width:0.7px;height:370px;background:#f1f1f1;"></div>
<div class="a" style="left:995.2px;top:120.3px;width:17.6px;height:17.4px;border:0.8px solid #d7d0e2;border-radius:2px;background:#fff"></div>
<svg style="left:998.9px;top:123.89999999999999px;" width="10" height="10" viewBox="0 0 10 10"><circle cx="5" cy="5" r="4.3" fill="none" stroke="#7b6a9c" stroke-width="0.9"/><path d="M5 4.3V7.6" stroke="#7b6a9c" stroke-width="1"/><circle cx="5" cy="2.8" r="0.6" fill="#7b6a9c"/></svg>
<div class="a" style="left:995.2px;top:145.3px;width:17.6px;height:17.4px;border:0.8px solid #d3e6da;border-radius:2px;background:#fff"></div>
<svg style="left:998.9px;top:148.9px;" width="10" height="10" viewBox="0 0 10 10"><path d="M4 3.2H2.6Q0.7 3.2 0.7 5.1Q0.7 7 2.6 7H4M6 3.2H7.4Q9.3 3.2 9.3 5.1Q9.3 7 7.4 7H6M3.2 5.1H6.8" fill="none" stroke="#72b08e" stroke-width="1"/></svg>
<div class="a" style="left:995.2px;top:171.0px;width:17.6px;height:17.4px;border:0.8px solid #c9d3e2;border-radius:2px;background:#fff"></div>
<svg style="left:998.9px;top:174.6px;" width="10" height="10" viewBox="0 0 10 10"><path d="M2 2.5 A4 4 0 0 1 8.4 3.2 M8.6 6.6 A4 4 0 0 1 2.6 8.4 M1 6.2 A4 4 0 0 1 1.2 3.6" fill="none" stroke="#55709c" stroke-width="0.9"/><path d="M7.6 1.8L9 3.6L7 3.9Z M3.4 9.2 L1.6 7.9 L3.5 7.2Z" fill="#55709c"/></svg>
<div class="a" style="left:995.2px;top:196.4px;width:17.6px;height:17.4px;border:0.8px solid #c8e2d0;border-radius:2px;background:#fff"></div>
<svg style="left:998.9px;top:200.0px;" width="10" height="10" viewBox="0 0 10 10"><path d="M4 3H2.7Q0.6 3 0.6 5.1Q0.6 7.2 2.7 7.2H4M6 3H7.3Q9.4 3 9.4 5.1Q9.4 7.2 7.3 7.2H6M3.1 5.1H6.9" fill="none" stroke="#3f9b60" stroke-width="1.3"/></svg>
<div class="a" style="left:995.2px;top:221.7px;width:17.6px;height:17.4px;border:0.8px solid #dadada;border-radius:2px;background:#fff"></div>
<svg style="left:998.9px;top:225.29999999999998px;" width="10" height="10" viewBox="0 0 10 10"><path d="M1.2 5 A3.9 3.9 0 1 0 2.4 2" fill="none" stroke="#666" stroke-width="0.9"/><path d="M0.8 0.8V3.2H3.2" fill="none" stroke="#666" stroke-width="0.9"/><path d="M5 2.8V5.2L6.6 6.6" fill="none" stroke="#666" stroke-width="0.9"/></svg>
<div class="a" style="left:995.2px;top:247.1px;width:17.6px;height:17.4px;border:0.8px solid #c3e2de;border-radius:2px;background:#fff"></div>
<svg style="left:998.9px;top:250.7px;" width="10" height="10" viewBox="0 0 10 10"><circle cx="5" cy="3.6" r="1.5" fill="none" stroke="#2f8f80" stroke-width="0.9"/><circle cx="2.1" cy="2.1" r="1.1" fill="none" stroke="#2f8f80" stroke-width="0.8"/><circle cx="7.9" cy="2.1" r="1.1" fill="none" stroke="#2f8f80" stroke-width="0.8"/><path d="M2.7 9.6 Q2.7 6.2 5 6.2 Q7.3 6.2 7.3 9.6Z M0.3 6.6 Q0.4 4.3 2.1 4.3 M9.7 6.6 Q9.6 4.3 7.9 4.3" fill="none" stroke="#2f8f80" stroke-width="0.9"/></svg>
<div class="a" style="left:981.8px;top:279.3px;width:10.4px;height:21.4px;background:#8f949e;border-radius:2px 0 0 2px;"></div>
<svg style="left:985px;top:286.3px;" width="4" height="7" viewBox="0 0 4 7"><path d="M3.4 0.5 L0.8 3.5 L3.4 6.5" fill="none" stroke="#fff" stroke-width="1"/></svg>
<div class="a" style="left:9px;top:59px;width:10.8px;height:11px;background:#e7505c;border-radius:1.5px;"></div>
<svg style="left:11.2px;top:61.3px;" width="6.4" height="6.4" viewBox="0 0 6.4 6.4"><path d="M3.2 0.2V6.2M0.2 3.2H6.2" stroke="#fff" stroke-width="0.95"/></svg>
<div class="a" style="left:5.8px;top:80.5px;width:17.2px;height:18px;border:0.8px solid #f4f4f4;border-radius:3px"></div>
<svg style="left:8.6px;top:85.4px;" width="11.4" height="9" viewBox="0 0 11.4 9"><rect x="0.55" y="0.6" width="10.3" height="8" rx="1" fill="none" stroke="#4a5068" stroke-width="1.05"/><rect x="6.4" y="0.6" width="4.4" height="2.6" fill="#1e2a50"/></svg>
<div class="a" style="left:5.8px;top:104.5px;width:17.2px;height:18px;border:0.8px solid #f4f4f4;border-radius:3px"></div>
<svg style="left:8px;top:108.2px;" width="12.6" height="11.8" viewBox="0 0 12.6 11.8"><path d="M0.8 0.6 H11.8 Q12.3 1.1 11.7 1.8 L7.9 6.2 V10.6 Q7.9 11.1 7.4 11.1 H5.2 Q4.7 11.1 4.7 10.6 V6.2 L0.9 1.8 Q0.3 1.1 0.8 0.6 Z" fill="none" stroke="#3a4260" stroke-width="1.1" stroke-linejoin="round"/></svg>
<div class="a" style="left:5.8px;top:130.4px;width:17.2px;height:18px;border:0.8px solid #f4f4f4;border-radius:3px"></div>
<svg style="left:8.2px;top:136.3px;" width="11.8" height="6.2" viewBox="0 0 11.8 6.2"><path d="M0 0.7H1.6M0 3.1H1.6M0 5.5H1.6" stroke="#2f3a55" stroke-width="1.2"/><path d="M3 0.7H11.8M3 3.1H11.8M3 5.5H11.8" stroke="#2f3a55" stroke-width="1.2"/></svg>
<div class="a" style="left:5.8px;top:154px;width:17.2px;height:18px;border:0.8px solid #f4f4f4;border-radius:3px"></div>
<svg style="left:9.6px;top:158px;" width="9.2" height="10.2" viewBox="0 0 9.2 10.2"><rect x="0.6" y="1.6" width="8" height="8.6" rx="1" fill="none" stroke="#555" stroke-width="1.1"/><rect x="2.6" y="0.5" width="4" height="2.2" fill="#fff" stroke="#555" stroke-width="0.9"/><path d="M2.4 5H6.6M2.4 7.2H5.2" stroke="#555" stroke-width="0.9"/></svg>
<div class="a" style="left:5.8px;top:180.3px;width:17.2px;height:18px;border:0.8px solid #f4f4f4;border-radius:3px"></div>
<svg style="left:8.2px;top:183.6px;opacity:.75;" width="11.8" height="11.4" viewBox="0 0 11.8 11.4"><rect x="0.6" y="0.6" width="10.6" height="10.2" rx="1.2" fill="none" stroke="#8a70c8" stroke-width="1.1"/><circle cx="3.1" cy="3.6" r="0.9" fill="none" stroke="#8a70c8" stroke-width="0.8"/><circle cx="3.1" cy="7.6" r="0.9" fill="none" stroke="#8a70c8" stroke-width="0.8"/><path d="M5 3.6H9.4M5 7.6H9.4" stroke="#8a70c8" stroke-width="0.9"/></svg>
<div class="a" style="left:5.8px;top:204.5px;width:17.2px;height:18px;border:0.8px solid #f4f4f4;border-radius:3px"></div>
<svg style="left:8px;top:208.3px;opacity:.75;" width="12.6" height="10.8" viewBox="0 0 12.6 10.8"><rect x="0.6" y="0.6" width="11.4" height="9.6" rx="1.2" fill="none" stroke="#3b9aa8" stroke-width="1.1"/><path d="M0.6 3.6H12M0.6 6.8H12M4.4 3.6V10.2M8.2 3.6V10.2" stroke="#3b9aa8" stroke-width="0.9"/></svg>
<div class="a" style="left:5.8px;top:230px;width:17.2px;height:18px;border:0.8px solid #f4f4f4;border-radius:3px"></div>
<svg style="left:9.2px;top:232.4px;opacity:.75;" width="10" height="13.6" viewBox="0 0 10 13.6"><circle cx="1.8" cy="1.8" r="1.3" fill="none" stroke="#d9a24a" stroke-width="0.9"/><path d="M1.8 3.1V11.8H6.6M1.8 7H6.6" fill="none" stroke="#d9a24a" stroke-width="0.9"/><circle cx="8" cy="7" r="1.4" fill="none" stroke="#d9a24a" stroke-width="0.9"/><circle cx="8" cy="11.8" r="1.4" fill="none" stroke="#d9a24a" stroke-width="0.9"/></svg>
<div class="a" style="left:5.8px;top:253.60000000000002px;width:17.2px;height:18px;border:0.8px solid #f4f4f4;border-radius:3px"></div>
<svg style="left:9px;top:258.3px;opacity:.75;" width="10.6" height="9.2" viewBox="0 0 10.6 9.2"><rect x="0.6" y="0.6" width="4" height="8" fill="none" stroke="#d98a5a" stroke-width="1"/><path d="M0.6 4.6H4.6" stroke="#d98a5a" stroke-width="0.9"/><rect x="6" y="0.6" width="4" height="8" fill="none" stroke="#d98a5a" stroke-width="1"/><circle cx="8" cy="4.6" r="1.3" fill="none" stroke="#d98a5a" stroke-width="0.9"/></svg>
<div class="a" style="left:5.8px;top:278.3px;width:17.2px;height:18px;border:0.8px solid #f4f4f4;border-radius:3px"></div>
<svg style="left:8.6px;top:281.8px;opacity:.75;" width="11" height="11.1" viewBox="0 0 11 11.1"><path d="M5.5 11V6L1.6 1.6M5.5 6L9.4 1.6" fill="none" stroke="#b070a0" stroke-width="1"/><path d="M0.6 3V0.6H3M8 0.6H10.4V3" fill="none" stroke="#b070a0" stroke-width="0.9"/></svg>
<div class="a" style="left:5.8px;top:304px;width:17.2px;height:18px;border:0.8px solid #f4f4f4;border-radius:3px"></div>
<svg style="left:9px;top:307.7px;opacity:.75;" width="10.2" height="10.6" viewBox="0 0 10.2 10.6"><circle cx="2" cy="2" r="1.5" fill="none" stroke="#4a82b0" stroke-width="1"/><path d="M2 3.5V8.6H6.6" fill="none" stroke="#4a82b0" stroke-width="1"/><circle cx="2" cy="8.6" r="1.5" fill="none" stroke="#4a82b0" stroke-width="1"/><circle cx="8.2" cy="8.6" r="1.5" fill="none" stroke="#4a82b0" stroke-width="1"/></svg>
<div class="a" style="left:5.8px;top:328.3px;width:17.2px;height:18px;border:0.8px solid #f4f4f4;border-radius:3px"></div>
<svg style="left:9px;top:332.4px;opacity:.75;" width="11" height="10" viewBox="0 0 11 10"><rect x="0.6" y="0.6" width="9.8" height="9" rx="1" fill="none" stroke="#d9915a" stroke-width="1"/><path d="M0.6 2.6H10.4" stroke="#d9915a" stroke-width="0.9"/><path d="M2.6 6.1 Q5.5 3.6 8.4 6.1 Q5.5 8.6 2.6 6.1Z" fill="none" stroke="#d9915a" stroke-width="0.8"/></svg>
<div class="a" style="left:5.8px;top:354px;width:17.2px;height:18px;border:0.8px solid #f4f4f4;border-radius:3px"></div>
<svg style="left:8.8px;top:357.6px;opacity:.75;" width="11" height="8.4" viewBox="0 0 11 8.4"><path d="M0.2 6H4.8M2.9 4.1L4.9 6L2.9 7.9M10.8 2.4H6M7.9 0.5L5.9 2.4L7.9 4.3" fill="none" stroke="#3aa0b0" stroke-width="1.1"/></svg>
<div class="a" style="left:5.8px;top:377.3px;width:17.2px;height:18px;border:0.8px solid #f4f4f4;border-radius:3px"></div>
<svg style="left:8.4px;top:379.8px;opacity:.75;" width="11.6" height="13" viewBox="0 0 11.6 13"><rect x="0.6" y="0.6" width="10.4" height="11.8" rx="1.4" fill="none" stroke="#8f70c0" stroke-width="1.1"/><path d="M3 4H6M4 6.6H8.6M5 9H8.6" stroke="#8f70c0" stroke-width="0.9"/></svg>
<div class="a" style="left:5.8px;top:402px;width:17.2px;height:18px;border:0.8px solid #f4f4f4;border-radius:3px"></div>
<svg style="left:8.2px;top:404.5px;opacity:.75;" width="12.6" height="13" viewBox="0 0 12.6 13"><path d="M1.4 6.5 A5 5 0 1 0 2.8 2.6" fill="none" stroke="#666" stroke-width="1.1"/><path d="M1.2 0.8V3.6H4" fill="none" stroke="#666" stroke-width="1"/><path d="M6.4 3.6V6.5L8.4 8.2" fill="none" stroke="#666" stroke-width="1"/></svg>
<div class="a" style="left:5.8px;top:426.6px;width:17.2px;height:18px;border:0.8px solid #f4f4f4;border-radius:3px"></div>
<svg style="left:8.4px;top:429px;opacity:.75;" width="11.8" height="13.2" viewBox="0 0 11.8 13.2"><rect x="0.6" y="0.6" width="10.6" height="12" rx="1" fill="none" stroke="#3aa0b0" stroke-width="1"/><path d="M3.4 9.6V6.4M5.9 9.6V4.4M8.4 9.6V7.4" stroke="#3aa0b0" stroke-width="1"/></svg>
<div class="a" style="left:5.8px;top:450.6px;width:17.2px;height:18px;border:0.8px solid #f4f4f4;border-radius:3px"></div>
<svg style="left:8px;top:453.8px;opacity:.75;" width="12.2" height="11.6" viewBox="0 0 12.2 11.6"><path d="M1 9.8 A5.6 5.6 0 1 1 11.2 9.8 Z" fill="none" stroke="#8f70c0" stroke-width="1.1" stroke-linejoin="round"/><path d="M4.8 8.2 L8 4.8" stroke="#8f70c0" stroke-width="1.6"/></svg>
<svg style="left:11px;top:477.6px;" width="7" height="4" viewBox="0 0 7 4"><path d="M0 3 Q3.5 -0.5 7 3Z" fill="#2f3a55"/></svg>
<div class="a" style="left:412.3px;top:177px;width:199.5px;height:132.5px;background:#fff;border-radius:4px;box-shadow:0 2px 7px rgba(0,0,0,.16),0 0 1px rgba(0,0,0,.12)"></div>
<div class="t" style="left:425.50px;top:188.17px;font-size:11.5px;color:#3a3a3a;font-weight:normal;">Item Type</div>
<div class="a" style="left:412.5px;top:208.3px;width:199px;height:0.8px;background:#f1f1f1;"></div>
<div class="a" style="left:414.5px;top:212.5px;width:195px;height:22.9px;border:1px solid #c9c9c9;border-radius:3px"></div>
<svg style="left:417.8px;top:218.6px;" width="6.1" height="9.8" viewBox="0 0 6.1 9.8"><path d="M1.6 0 H5.6 L4.1 3.7 H6.1 L1.3 9.8 L2.3 5.3 H0 Z" fill="#1e1e1e"/></svg>
<div class="a" style="left:429.3px;top:213.5px;width:39.5px;height:21px;background:#a9dea0;"></div>
<div class="t" style="left:430.50px;top:219.81px;font-size:9.2px;color:#163016;font-weight:normal;">Electrical</div>
<svg style="left:569.6px;top:217.5px;" width="10.5" height="10.5" viewBox="0 0 10.5 10.5"><circle cx="5.25" cy="5.25" r="5.25" fill="#8a8a8a"/><path d="M3.1 3.1L7.4 7.4M7.4 3.1L3.1 7.4" stroke="#fff" stroke-width="1.4"/></svg>
<svg style="left:594.8px;top:221.8px;" width="6" height="3.2" viewBox="0 0 6 3.2"><path d="M0 0H6L3 3.2Z" fill="#333"/></svg>
<div class="t" style="left:414.60px;top:241.34px;font-size:10px;color:#555;font-weight:normal;">Updating 4 objects</div>
<div class="a" style="left:444px;top:272.5px;width:66.2px;height:23px;background:#1b3f66;border-radius:2.5px;"></div>
<div class="t" style="left:447.10px;top:279.73px;width:60px;text-align:center;font-size:9.3px;color:#fff;font-weight:normal;-webkit-text-stroke:0.05px #fff;">Save</div>
<div class="a" style="left:513.9px;top:272.5px;width:66.5px;height:23px;border:0.8px solid #f0f0f0;border-radius:2.5px;background:#fff"></div>
<div class="t" style="left:517.10px;top:279.39px;width:60px;text-align:center;font-size:9.7px;color:#444;font-weight:normal;-webkit-text-stroke:0.05px #444;">Cancel</div>
<div class="a" style="left:345.3px;top:459.4px;width:123.5px;height:25px;background:#dc3541;border-radius:3.5px;"></div>
<div class="t" style="left:356.50px;top:467.14px;font-size:10px;color:#fff;font-weight:normal;-webkit-text-stroke:0.05px #fff;">4 Objects Selected</div>
<svg style="left:449px;top:468.1px;" width="6.8" height="6.8" viewBox="0 0 6.8 6.8"><path d="M0.4 0.4L6.4 6.4M6.4 0.4L0.4 6.4" stroke="#fff" stroke-width="0.9"/></svg>
<div class="a" style="left:246px;top:482px;width:467px;height:4px;background:#5f6670;"></div>
<div class="a" style="left:514.2px;top:475.8px;width:20.7px;height:10.2px;background:#8b9199;border-radius:2px 2px 0 0;"></div>
<svg style="left:521.2px;top:477.8px;" width="6.8" height="3.8" viewBox="0 0 6.8 3.8"><path d="M0.5 3.3 L3.4 0.6 L6.3 3.3" fill="none" stroke="#fff" stroke-width="1.1"/></svg>
</body></html>
